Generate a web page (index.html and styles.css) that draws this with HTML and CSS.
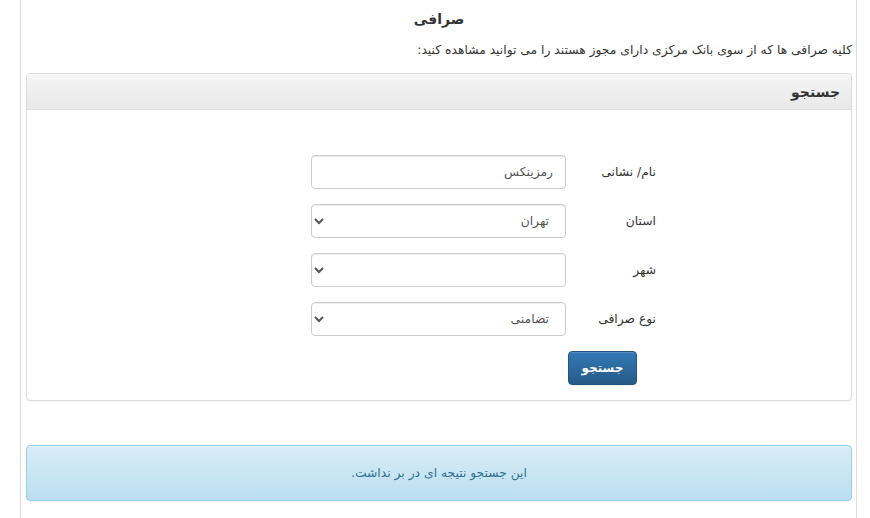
FILE: index.html
```html
<!DOCTYPE html>
<html lang="fa" dir="rtl">
<head>
<meta charset="utf-8">
<title>صرافی</title>
<link rel="stylesheet" href="styles.css">
</head>
<body>
<div class="page">
  <h4 class="title">صرافی</h4>
  <p class="desc">کلیه صرافی ها که از سوی بانک مرکزی دارای مجوز هستند را می توانید مشاهده کنید:</p>
  <div class="panel">
    <div class="panel-heading">جستجو</div>
    <div class="panel-body">
      <form class="search-form">
        <div class="form-row">
          <label class="form-label">نام/ نشانی</label>
          <input class="form-control" type="text" value="رمزینکس">
        </div>
        <div class="form-row">
          <label class="form-label">استان</label>
          <select class="form-control"><option>تهران</option></select>
        </div>
        <div class="form-row">
          <label class="form-label">شهر</label>
          <select class="form-control"><option></option></select>
        </div>
        <div class="form-row">
          <label class="form-label">نوع صرافی</label>
          <select class="form-control"><option>تضامنی</option></select>
        </div>
        <div class="form-row button-row">
          <button class="btn-primary" type="button">جستجو</button>
        </div>
      </form>
    </div>
  </div>
  <div class="alert-info">این جستجو نتیجه ای در بر نداشت.</div>
</div>
</body>
</html>
```
FILE: styles.css
```css
html, body {
  margin: 0;
  padding: 0;
  background: #fff;
}
body {
  font-family: "DejaVu Sans", sans-serif;
  color: #333;
  font-size: 13px;
}
.page {
  direction: rtl;
  margin: 0 13px 0 20px;
  border-left: 1px solid #ddd;
  border-right: 1px solid #ddd;
  min-height: 518px;
  box-sizing: border-box;
  padding: 9px 4px 0 5px;
}
.title {
  margin: 0;
  text-align: center;
  font-size: 14px;
  font-weight: bold;
  line-height: 20px;
  height: 20px;
}
.desc {
  margin: 11px 0 13px;
  font-size: 12.3px;
  line-height: 20px;
  height: 20px;
  white-space: nowrap;
}
.panel {
  border: 1px solid #ddd;
  border-radius: 4px;
  box-shadow: 0 1px 2px rgba(0, 0, 0, .05);
  background: #fff;
}
.panel-heading {
  height: 36px;
  box-sizing: border-box;
  padding: 0 11px;
  line-height: 36px;
  font-size: 14px;
  font-weight: bold;
  color: #333;
  background: linear-gradient(to bottom, #f5f5f5 0%, #e8e8e8 100%);
  border-bottom: 1px solid #ddd;
  border-radius: 3px 3px 0 0;
}
.panel-body {
  padding: 45px 15px 15px;
}
.search-form {
  display: flex;
  flex-direction: column;
  gap: 15px;
}
.form-row {
  display: flex;
  align-items: center;
  padding-right: 180px;
}
.form-label {
  width: 90px;
  font-size: 12.3px;
  color: #333;
}
.form-control {
  direction: rtl;
  width: 255px;
  height: 34px;
  box-sizing: border-box;
  border: 1px solid #ccc;
  border-radius: 4px;
  background-color: #fff;
  padding: 6px 12px;
  font-family: "DejaVu Sans", sans-serif;
  font-size: 12.3px;
  color: #555;
  box-shadow: inset 0 1px 1px rgba(0, 0, 0, .075);
}
.button-row {
  padding-right: 199px;
}
.btn-primary {
  width: 69px;
  height: 34px;
  box-sizing: border-box;
  border: 1px solid #245580;
  border-radius: 4px;
  background: linear-gradient(to bottom, #337ab7 0%, #265a88 100%);
  color: #fff;
  font-family: "DejaVu Sans", sans-serif;
  font-size: 12px;
  font-weight: bold;
  box-shadow: inset 0 1px 0 rgba(255, 255, 255, .15), 0 1px 1px rgba(0, 0, 0, .075);
  cursor: pointer;
}
.alert-info {
  margin-top: 44px;
  height: 56px;
  box-sizing: border-box;
  border: 1px solid #9acfea;
  border-radius: 4px;
  background: linear-gradient(to bottom, #d9edf7 0%, #b9def0 100%);
  color: #31708f;
  text-align: center;
  line-height: 54px;
  font-size: 12.3px;
  box-shadow: inset 0 1px 0 rgba(255, 255, 255, .25), 0 1px 2px rgba(0, 0, 0, .05);
}
```
